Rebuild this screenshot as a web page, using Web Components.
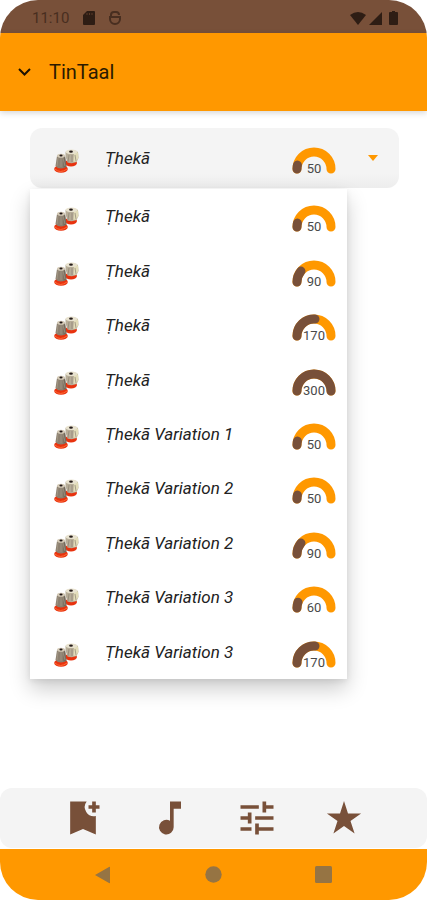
<!DOCTYPE html>
<html lang="en">
<head>
<meta charset="utf-8">
<meta name="viewport" content="width=device-width, initial-scale=1">
<title>TinTaal</title>
<style>
  :root { --brown: #785039; --orange: #ff9800; --panel: #f4f4f4; }
  body { margin: 0; background: #fff; font-family: Roboto, "Noto Sans", sans-serif; color: #222; }
</style>
</head>
<body>
<tal-app></tal-app>
<script>
const define = (name, html, setup) => {
  const template = document.createElement('template');
  template.innerHTML = html;
  customElements.define(name, class extends HTMLElement {
    connectedCallback() {
      if (this.shadowRoot) return;
      const content = template.content.cloneNode(true);
      if (setup) setup(this, content);
      this.attachShadow({ mode: 'open' }).append(content);
    }
  });
};

define('status-bar', `
<style>
  :host { display: flex; align-items: center; height: 33px; padding: 3px 29px 0 32px; box-sizing: border-box; background: var(--brown); color: #482e20; font-size: 15px; line-height: 20px; }
  .left { display: flex; align-items: center; gap: 14px; flex: 1; }
  .right { display: flex; align-items: center; gap: 3px; color: #2e1d14; }
  svg { display: block; fill: currentColor; }
  .card { color: #2e1d14; }
  .battery { margin-left: 4px; }
</style>
<div class="left"><span>11:10</span>
<svg class="card" width="12" height="14" viewBox="0 0 12 14" aria-hidden="true"><path d="M4 0h7a1 1 0 0 1 1 1v12a1 1 0 0 1-1 1H1a1 1 0 0 1-1-1V4z"/><path d="M4 2v2M6.500 2v2M9 2v2" stroke="#5a3a28"/></svg>
<svg width="12" height="14" viewBox="0 0 12 14" aria-hidden="true"><path d="M2 6V4a3 3 0 0 1 3-3h2a3 3 0 0 1 3 3M1 6h10v2a5 5 0 0 1-10 0z" fill="none" stroke="currentColor" stroke-width="2"/></svg></div>
<div class="right">
<svg width="16" height="13" viewBox="0 0 16 13" aria-hidden="true"><path d="M0 3Q8-3 16 3L8 13z"/></svg>
<svg width="13" height="13" viewBox="0 0 13 13" aria-hidden="true"><path d="M13 0v13H0z"/></svg>
<svg class="battery" width="9" height="14" viewBox="0 0 9 14" aria-hidden="true"><path d="M3 0h3v1h2a1 1 0 0 1 1 1v11a1 1 0 0 1-1 1H1a1 1 0 0 1-1-1V2a1 1 0 0 1 1-1h2z"/></svg>
</div>`);

define('app-bar', `
<style>
  :host { display: flex; align-items: center; gap: 16px; height: 78px; padding: 0 16px; background: var(--orange); color: #2b1a00; box-shadow: 0 2px 6px rgba(0,0,0,.16); }
  button { border: 0; padding: 0; background: none; color: #1d1200; width: 17px; height: 32px; display: grid; place-items: center; }
  h1 { margin: 0; font-size: 20px; line-height: 24px; font-weight: 400; }
</style>
<button aria-label="Collapse"><svg width="13" height="8" viewBox="0 0 13 8" aria-hidden="true"><path d="M1 1l5.500 5.500L12 1" fill="none" stroke="currentColor" stroke-width="2"/></svg></button>
<h1><slot></slot></h1>`);

define('tabla-icon', `
<style>:host { display: block; } svg { display: block; }</style>
<svg width="26" height="24" viewBox="0 0 26 24" aria-hidden="true">
  <ellipse cx="17" cy="14" rx="6" ry="3.500" fill="#e8320e"/>
  <path d="M11.500 3Q17-1 24 3l.5 6-2 4q-4 2-9 .5l-2-6z" fill="#b7ad98"/>
  <path d="M20 3l4 .5.4 5.500-2 3.500-3 .5z" fill="#e2dcb8"/>
  <ellipse cx="17.500" cy="2.800" rx="6" ry="2.300" fill="#e8e2cf"/>
  <ellipse cx="17" cy="2.700" rx="1.900" ry="1.100" fill="#251c1a"/>
  <path d="M15 6l-1 7M18 6v7M21 6l1 6" stroke="#8d8373" stroke-width=".7" fill="none"/>
  <ellipse cx="7" cy="20" rx="6.800" ry="3.800" fill="#e8320e"/>
  <path d="M1 20q5 5 12 0" fill="none" stroke="#ff6b36"/>
  <path d="M3 7Q7 4 11 7l1.500 10.500q-2 2-5.500 2T1.500 17z" fill="#8c8070"/>
  <path d="M9 6l2 1.500L12.500 17.500l-3 1.500z" fill="#756a5c"/>
  <ellipse cx="7" cy="6.800" rx="4" ry="2" fill="#d5cbb8"/>
  <ellipse cx="7" cy="6.500" rx="1.600" ry=".9" fill="#211816"/>
  <path d="M4 9L3 17M7 9v9M9 9l2 8" stroke="#a89c89" stroke-width=".7" fill="none"/>
</svg>`);

define('tempo-gauge', `
<style>
  :host { display: grid; justify-items: center; align-items: end; width: 44px; height: 28px; color: #494949; font-size: 13px; line-height: 13px; }
  svg, span { grid-area: 1 / 1; }
  svg { display: block; }
  path { fill: none; stroke-width: 9; stroke-linecap: round; }
  .track { stroke: var(--orange); }
  .fill { stroke: var(--brown); }
</style>
<svg width="44" height="28" viewBox="0 0 44 28" aria-hidden="true"><path class="track" d="M5 22a17 17 0 0 1 34 0"/><path class="fill"/></svg>
<span></span>`, (host, root) => {
  const bpm = Number(host.getAttribute('bpm'));
  const angle = Math.PI * (bpm - 30) / 270;
  root.querySelector('.fill').setAttribute('d',
    `M5 22A17 17 0 0 1 ${22 - 17 * Math.cos(angle)} ${22 - 17 * Math.sin(angle)}`);
  root.querySelector('span').textContent = bpm;
});

define('theka-row', `
<style>
  :host { display: grid; grid-template-columns: 26px 1fr 44px; align-items: center; column-gap: 25px; padding: 0 11px 0 24px; font-size: 17px; line-height: 24px; font-style: italic; text-align: left; }
  tempo-gauge { font-style: normal; margin-top: 6px; }
  tabla-icon { margin-top: 6px; }
</style>
<tabla-icon></tabla-icon><span><slot></slot></span><tempo-gauge></tempo-gauge>`,
(host, root) => root.querySelector('tempo-gauge').setAttribute('bpm', host.getAttribute('bpm')));

define('theka-select', `
<style>
  :host { display: block; position: relative; }
  button { border: 0; padding: 0; font: inherit; color: inherit; background: none; display: grid; align-items: center; width: 100%; }
  .field { height: 60px; grid-template-columns: 1fr 52px; background: linear-gradient(#f4f4f4 75%, #ededed); border-radius: 12px; }
  .caret { display: block; justify-self: center; }
  .menu { position: absolute; top: 100%; left: 0; right: 52px; margin-top: 1px; min-height: 490px; display: grid; grid-auto-rows: 1fr; background: #fff; box-shadow: 0 10px 20px rgba(0,0,0,.2), 0 2px 6px rgba(0,0,0,.08); }
  .menu[hidden] { display: none; }
</style>
<button class="field" aria-haspopup="listbox" aria-expanded="true" aria-controls="list"><theka-row bpm="50">Ṭhekā</theka-row>
<svg class="caret" width="10" height="6" viewBox="0 0 10 6" aria-hidden="true"><path d="M0 0h10L5 6z" fill="#ff9800"/></svg></button>
<div class="menu" id="list" role="listbox" aria-label="Variation">
<button role="option" aria-selected="true"><theka-row bpm="50">Ṭhekā</theka-row></button>
<button role="option"><theka-row bpm="90">Ṭhekā</theka-row></button>
<button role="option"><theka-row bpm="170">Ṭhekā</theka-row></button>
<button role="option"><theka-row bpm="300">Ṭhekā</theka-row></button>
<button role="option"><theka-row bpm="50">Ṭhekā Variation 1</theka-row></button>
<button role="option"><theka-row bpm="50">Ṭhekā Variation 2</theka-row></button>
<button role="option"><theka-row bpm="90">Ṭhekā Variation 2</theka-row></button>
<button role="option"><theka-row bpm="60">Ṭhekā Variation 3</theka-row></button>
<button role="option"><theka-row bpm="170">Ṭhekā Variation 3</theka-row></button>
</div>`, (host, root) => {
  const field = root.querySelector('.field'), menu = root.querySelector('.menu');
  field.addEventListener('click', () => {
    menu.hidden = !menu.hidden;
    field.setAttribute('aria-expanded', String(!menu.hidden));
  });
});

define('tool-bar', `
<style>
  :host { display: flex; height: 60px; padding: 0 40px; margin-bottom: 1px; background: var(--panel); border-radius: 12px; }
  button { flex: 1; border: 0; padding: 0; background: none; color: var(--brown); display: grid; place-items: center; }
  svg { display: block; fill: currentColor; }
</style>
<button aria-label="Add bookmark"><svg width="44" height="44" viewBox="0 0 24 24"><path d="M21 7h-2v2h-2V7h-2V5h2V3h2v2h2zM19 21l-7-3-7 3V3h9a5 5 0 0 0 5 7.900z"/></svg></button>
<button aria-label="Sound"><svg width="44" height="44" viewBox="0 0 24 24"><path d="M12 3v10.550A4 4 0 1 0 14 17V7h4V3z"/></svg></button>
<button aria-label="Settings"><svg width="44" height="44" viewBox="0 0 24 24"><path d="M3 17v2h6v-2H3zM3 5v2h10V5H3zm10 16v-2h8v-2h-8v-2h-2v6h2zM7 9v2H3v2h4v2h2V9H7zm14 4v-2H11v2h10zm-6-4h2V7h4V5h-4V3h-2v6z"/></svg></button>
<button aria-label="Favourites"><svg width="44" height="44" viewBox="-22 -23 44 44"><path d="M0-18l4 12.400h13.100L6.500 2.100l4.100 12.500L0 6.900l-10.600 7.700 4.100-12.500-10.600-7.700H-4z"/></svg></button>`);

define('system-nav', `
<style>
  :host { display: flex; height: 51px; padding: 0 48px; background: var(--orange); }
  button { flex: 1; border: 0; padding: 0; background: none; color: #967443; display: grid; place-items: center; }
  svg { display: block; fill: currentColor; }
</style>
<button aria-label="Back"><svg width="17" height="18" viewBox="0 0 17 18"><path d="M15 1v16a1 1 0 0 1-1 0L0 9l14-8q1-.5 1 0z"/></svg></button>
<button aria-label="Home"><svg width="17" height="17" viewBox="0 0 17 17"><circle cx="8.500" cy="8.500" r="8.200"/></svg></button>
<button aria-label="Recents"><svg width="17" height="17" viewBox="0 0 17 17"><rect width="17" height="17" rx="1.500"/></svg></button>`);

define('tal-app', `
<style>
  :host { display: flex; flex-direction: column; min-height: 100vh; border-radius: 38px; overflow: hidden; background: #fff; }
  main { flex: 1; padding: 17px 28px 0 30px; }
</style>
<status-bar></status-bar>
<app-bar>TinTaal</app-bar>
<main><theka-select></theka-select></main>
<tool-bar></tool-bar>
<system-nav></system-nav>`);
</script>
</body>
</html>
